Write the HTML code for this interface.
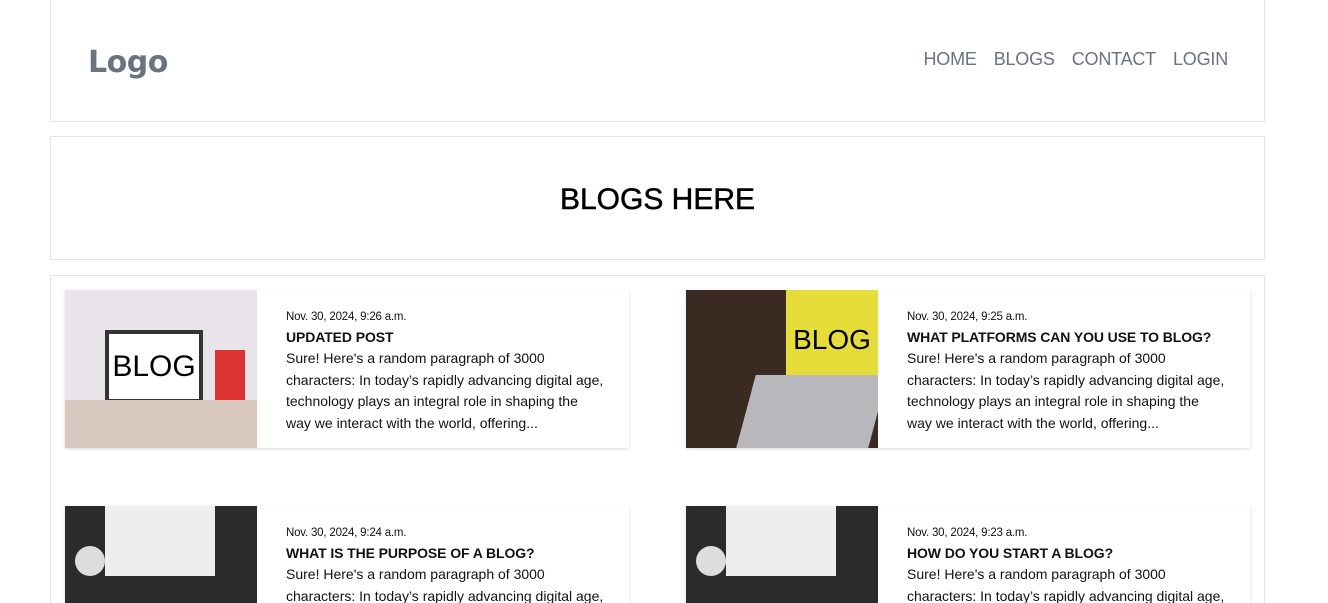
<!DOCTYPE html>
<html><head><meta charset="utf-8"><style>
html,body{margin:0;height:603px;overflow:hidden}
body{background:#fff;font-family:"Liberation Sans",sans-serif;width:1328px;position:relative}
.box{position:absolute;left:50px;width:1213px;border:1px solid #e5e5e5}
.logo{position:absolute;left:37px;top:45px;font-size:30px;font-weight:bold;color:#6b7280;font-family:"DejaVu Sans",sans-serif;letter-spacing:-0.5px}
.nav{position:absolute;right:36px;top:49px;font-size:18px;color:#6b7280;letter-spacing:-0.2px}
.nav span{margin-left:17px}
h1{position:absolute;left:0;right:0;top:46px;margin:0;text-align:center;font-size:30px;font-weight:normal;color:#000;-webkit-text-stroke:.5px #000}
.card{position:absolute;width:564px;height:158px;background:#fff;box-shadow:0 1px 3px rgba(0,0,0,.15)}
.img{position:absolute;left:0;top:0;width:192px;height:158px;overflow:hidden}
.txt{position:absolute;left:221px;top:21px;width:340px;color:#111;white-space:nowrap}
.d{font-size:11.5px;margin-bottom:6px;letter-spacing:-0.2px}
.t{font-size:14px;font-weight:bold;margin-bottom:3px;letter-spacing:-0.1px}
.b{font-size:14px;line-height:21.5px;letter-spacing:0}
</style></head><body>
<div class="box" style="top:-1px;height:121px">
<div class="logo">Logo</div>
<div class="nav"><span>HOME</span><span>BLOGS</span><span>CONTACT</span><span>LOGIN</span></div>
</div>
<div class="box" style="top:136px;height:122px"><h1>BLOGS HERE</h1></div>
<div class="box" style="top:275px;height:400px"></div>

<div class="card" style="left:65px;top:290px">
<div class="img" style="background:#e8e4ea"><div style="position:absolute;left:40px;top:40px;width:90px;height:65px;background:#fff;border:4px solid #333;font-size:30px;text-align:center;line-height:65px">BLOG</div><div style="position:absolute;left:0;top:110px;width:192px;height:48px;background:#d9c9c0"></div><div style="position:absolute;left:150px;top:60px;width:30px;height:50px;background:#d33"></div></div>
<div class="txt"><div class="d">Nov. 30, 2024, 9:26 a.m.</div><div class="t">UPDATED POST</div><div class="b">Sure! Here's a random paragraph of 3000<br>characters: In today’s rapidly advancing digital age,<br>technology plays an integral role in shaping the<br>way we interact with the world, offering...</div></div></div>

<div class="card" style="left:686px;top:290px">
<div class="img" style="background:#3a2a22"><div style="position:absolute;left:100px;top:0;width:92px;height:100px;background:#e6dc3a;font-size:28px;line-height:100px;text-align:center">BLOG</div><div style="position:absolute;left:60px;top:85px;width:132px;height:73px;background:#b8b8bc;transform:skewX(-15deg)"></div></div>
<div class="txt"><div class="d">Nov. 30, 2024, 9:25 a.m.</div><div class="t">WHAT PLATFORMS CAN YOU USE TO BLOG?</div><div class="b">Sure! Here's a random paragraph of 3000<br>characters: In today’s rapidly advancing digital age,<br>technology plays an integral role in shaping the<br>way we interact with the world, offering...</div></div></div>

<div class="card" style="left:65px;top:506px">
<div class="img" style="background:#2b2b2b"><div style="position:absolute;left:40px;top:0;width:110px;height:70px;background:#eee"></div><div style="position:absolute;left:10px;top:40px;width:30px;height:30px;border-radius:50%;background:#ddd"></div></div>
<div class="txt"><div class="d">Nov. 30, 2024, 9:24 a.m.</div><div class="t">WHAT IS THE PURPOSE OF A BLOG?</div><div class="b">Sure! Here's a random paragraph of 3000<br>characters: In today’s rapidly advancing digital age,<br>technology plays an integral role in shaping the<br>way we interact with the world, offering...</div></div></div>

<div class="card" style="left:686px;top:506px">
<div class="img" style="background:#2b2b2b"><div style="position:absolute;left:40px;top:0;width:110px;height:70px;background:#eee"></div><div style="position:absolute;left:10px;top:40px;width:30px;height:30px;border-radius:50%;background:#ddd"></div></div>
<div class="txt"><div class="d">Nov. 30, 2024, 9:23 a.m.</div><div class="t">HOW DO YOU START A BLOG?</div><div class="b">Sure! Here's a random paragraph of 3000<br>characters: In today’s rapidly advancing digital age,<br>technology plays an integral role in shaping the<br>way we interact with the world, offering...</div></div></div>
</body></html>
